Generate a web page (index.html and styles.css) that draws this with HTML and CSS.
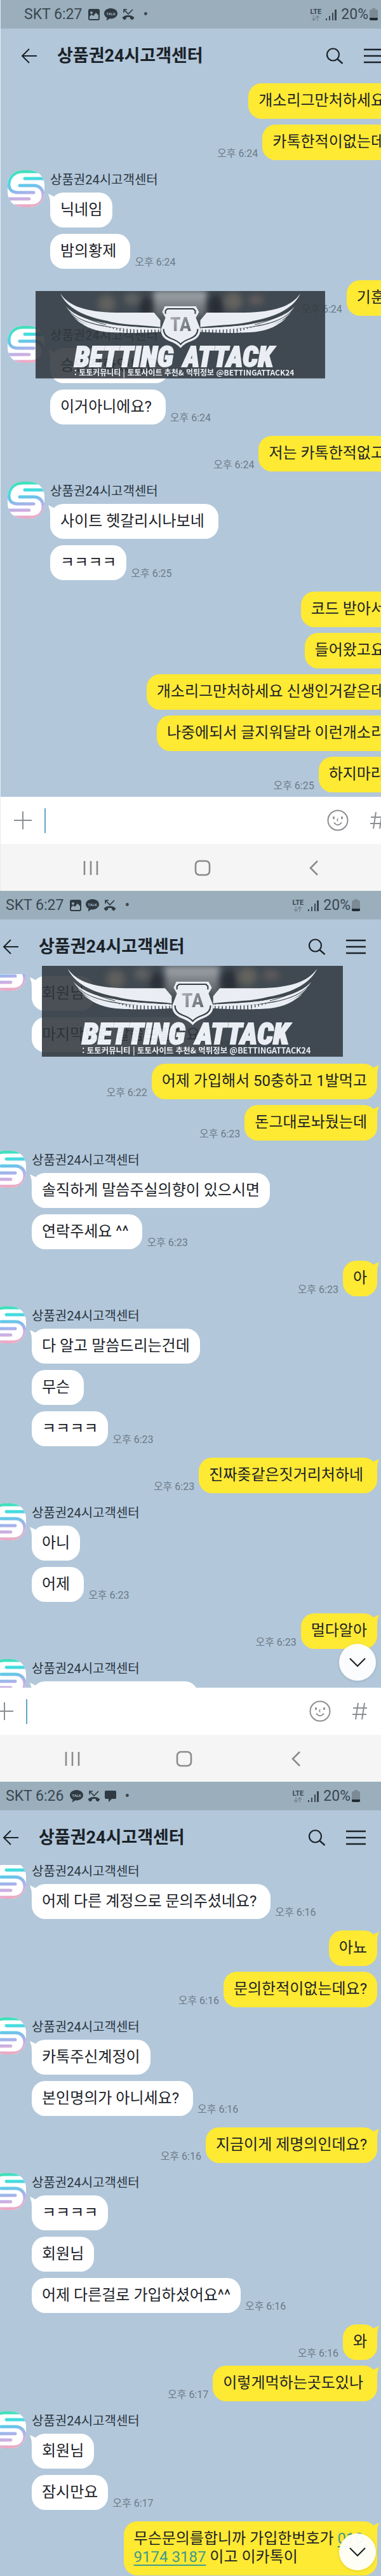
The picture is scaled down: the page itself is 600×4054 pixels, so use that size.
FILE: index.html
```
<!DOCTYPE html>
<html lang="ko">
<head>
  <meta charset="UTF-8">
  <meta name="viewport" content="width=device-width, initial-scale=1.0">
  <title>상품권24시고객센터</title>
  <link rel="stylesheet" href="styles.css">
</head>
<body>

<!-- icons -->
<svg class="defs" aria-hidden="true">
  <defs>
    <linearGradient id="rainbow" gradientUnits="userSpaceOnUse" x1="24" y1="0" x2="32" y2="58">
      <stop offset="0" stop-color="#43dfb4"/>
      <stop offset="0.22" stop-color="#3fe0dc"/>
      <stop offset="0.44" stop-color="#6cc3ea"/>
      <stop offset="0.62" stop-color="#a9b2ea"/>
      <stop offset="0.8" stop-color="#d3aee0"/>
      <stop offset="1" stop-color="#f2a9bd"/>
    </linearGradient>
    <clipPath id="round"><rect width="58" height="58" rx="23"/></clipPath>
    <linearGradient id="sky" x1="0" y1="0" x2="0" y2="1">
      <stop offset="0" stop-color="#a9adb0"/>
      <stop offset="0.6" stop-color="#8b8f92" stop-opacity="0.5"/>
      <stop offset="1" stop-color="#34393f" stop-opacity="0"/>
    </linearGradient>
    <linearGradient id="steel" x1="0" y1="0" x2="1" y2="1">
      <stop offset="0" stop-color="#b9bcbf"/>
      <stop offset="1" stop-color="#55595d"/>
    </linearGradient>
    <filter id="soft" x="-30%" y="-30%" width="160%" height="160%"><feGaussianBlur stdDeviation="5"/></filter>
  </defs>

  <symbol id="avatar" viewBox="0 0 58 58">
    <g clip-path="url(#round)">
      <rect width="58" height="58" fill="#fff"/>
      <g fill="none" stroke="url(#rainbow)" stroke-width="5" stroke-linecap="round">
        <path d="M54 2H24C10 2 2 11 2 22C2 31 8 35 16 35H41"/>
        <path d="M27 13L58 13.1"/>
        <path d="M19 24H41C50 24 56 30 56 39C56 49 49 56 38 56H6"/>
        <path d="M0 45L34 45.1"/>
      </g>
    </g>
  </symbol>
  <symbol id="i-image" viewBox="0 0 18 18">
    <path fill="#2f3a42" fill-rule="evenodd" d="M3 0H15Q18 0 18 3V15Q18 18 15 18H3Q0 18 0 15V3Q0 0 3 0ZM2 12V15Q2 16 3 16H15Q16 16 16 15V10L12 6L8 11L5 9ZM5 4A2 2 0 1 0 5 8A2 2 0 1 0 5 4Z"/>
  </symbol>
  <symbol id="i-talk" viewBox="0 0 21 20">
    <path fill="#2f3a42" d="M10.500 0C4.700 0 0 3.600 0 8.200C0 11 1.800 13.400 4.500 14.900L3.700 19.500L8.600 16.300C9.200 16.400 9.900 16.400 10.500 16.400C16.300 16.400 21 12.800 21 8.200C21 3.600 16.300 0 10.500 0Z"/>
    <text x="10.500" y="10.800" text-anchor="middle" font-size="6" font-weight="700" fill="#9aaebc">TALK</text>
  </symbol>
  <symbol id="i-missed" viewBox="0 0 20 18">
    <path fill="none" stroke="#2f3a42" stroke-width="1.600" d="M3 6V1H8M3 1L10 8L17 1"/>
    <path fill="#2f3a42" d="M10 10C5.500 10 2.500 11.500 0.500 13.800L3.500 17.500L7 15.500V13.200Q10 12.300 13 13.200V15.500L16.500 17.500L19.500 13.800C17.500 11.500 14.500 10 10 10Z"/>
  </symbol>
  <symbol id="i-sms" viewBox="0 0 18 18">
    <path fill="#2f3a42" d="M2 0H16Q18 0 18 2V11Q18 13 16 13H11L6 18V13H2Q0 13 0 11V2Q0 0 2 0Z"/>
  </symbol>
  <symbol id="i-updown" viewBox="0 0 14 9">
    <path fill="none" stroke="#74858f" stroke-width="1.300" d="M4 0V7M1 5L4 8L7 5M10 9V1M7 4L10 1L13 4"/>
  </symbol>
  <symbol id="i-signal" viewBox="0 0 17 18">
    <path fill="#3a4750" d="M0 15H2V18H0ZM5 11H7V18H5ZM10 6H12V18H10ZM14 1H17V18H14Z"/>
  </symbol>
  <symbol id="i-battery" viewBox="0 0 13 19">
    <path fill="#7b8a94" d="M4 0H9V2H11Q13 2 13 4V15H0V4Q0 2 2 2H4Z"/>
    <path fill="#1f2a32" d="M0 15H13V17Q13 19 11 19H2Q0 19 0 17Z"/>
  </symbol>
  <symbol id="i-back" viewBox="0 0 25 24">
    <path fill="none" stroke="#1b2228" stroke-width="2" d="M13 1L2 12L13 23M2 12H25"/>
  </symbol>
  <symbol id="i-search" viewBox="0 0 28 26">
    <circle cx="11.500" cy="11" r="9.500" fill="none" stroke="#1b2228" stroke-width="2.200"/>
    <path stroke="#1b2228" stroke-width="2.400" d="M18 17.500L26.500 25"/>
  </symbol>
  <symbol id="i-menu" viewBox="0 0 31 24">
    <path stroke="#1b2228" stroke-width="2.400" d="M0 2H31M0 12H31M0 22H31"/>
  </symbol>
  <symbol id="i-plus" viewBox="0 0 28 28">
    <path stroke="#8b8e92" stroke-width="2" d="M14 0V28M0 14H28"/>
  </symbol>
  <symbol id="i-smile" viewBox="0 0 34 34">
    <g fill="none" stroke="#8b8e92" stroke-width="2">
      <circle cx="17" cy="17" r="15.500"/>
      <path d="M11 20.500Q17 28 23 20.500"/>
      <path stroke-width="1.500" d="M17.500 14Q14.500 16.500 17.500 18.500"/>
      <path stroke-width="2.600" d="M10.500 11V15M23.500 11V15"/>
    </g>
  </symbol>
  <symbol id="i-hash" viewBox="0 0 23 28">
    <path stroke="#8b8e92" stroke-width="2" d="M9 1L5 27M19 1L15 27M1 9H23M0 19H22"/>
  </symbol>
  <symbol id="i-recent" viewBox="0 0 24 24">
    <path stroke="#8a8a8a" stroke-width="2.600" d="M2 1V23M12 1V23M22 1V23"/>
  </symbol>
  <symbol id="i-home" viewBox="0 0 26 26">
    <rect x="2" y="2" width="22" height="22" rx="6" fill="none" stroke="#8a8a8a" stroke-width="2.600"/>
  </symbol>
  <symbol id="i-prev" viewBox="0 0 14 24">
    <path fill="none" stroke="#8a8a8a" stroke-width="2.600" d="M13 1L2 12L13 23"/>
  </symbol>
  <symbol id="i-down" viewBox="0 0 26 16">
    <path fill="none" stroke="#1b2228" stroke-width="2.200" d="M1 2L13 14L25 2"/>
  </symbol>

  <symbol id="wing" viewBox="0 0 160 66">
    <g fill="#edf1f6">
      <path d="M0 0C14 20 40 29 88 30L148 30L158 42V53C128 49 98 50 74 43C36 36 10 22 0 0Z"/>
      <path d="M9 20C20 33 42 42 70 46C92 52 120 52 158 55L158 57C122 57 96 56 72 51C40 46 18 36 9 20Z"/>
      <path d="M15 29C27 41 46 48 74 53L90 58C58 56 28 47 15 29Z"/>
      <path d="M22 38C36 48 54 53 84 56L96 60C64 60 37 54 22 38Z"/>
      <path d="M32 46C46 54 64 57 94 59L102 61C74 63 48 59 32 46Z"/>
    </g>
    <path fill="none" stroke="#edf1f6" stroke-width="7" stroke-dasharray="4 1.500" d="M68 55C92 60 120 59 158 57"/>
    <path fill="none" stroke="#34393f" stroke-width="1" d="M60 43C84 51 118 51 158 54M30 33C44 41 56 45 72 49"/>
  </symbol>

  <symbol id="banner" viewBox="0 0 457 138">
    <rect width="457" height="138" fill="#30363d" fill-opacity="0.92"/>
    <rect x="186" width="84" height="58" fill="url(#sky)" filter="url(#soft)"/>
    <g filter="url(#soft)">
      <ellipse cx="112" cy="20" rx="14" ry="14" fill="#6f6a60" opacity="0.6"/>
      <ellipse cx="152" cy="12" rx="12" ry="10" fill="#77746d" opacity="0.5"/>
      <ellipse cx="174" cy="26" rx="10" ry="16" fill="#23282d"/>
      <ellipse cx="284" cy="26" rx="12" ry="20" fill="#23282d"/>
      <ellipse cx="312" cy="16" rx="14" ry="14" fill="#77705f" opacity="0.6"/>
      <ellipse cx="348" cy="14" rx="12" ry="8" fill="#7d6a61" opacity="0.5"/>
    </g>
    <use href="#wing" x="39" y="4" width="160" height="66"/>
    <use href="#wing" x="39" y="4" width="160" height="66" transform="translate(457 0) scale(-1 1)"/>
    <path fill="#edf1f6" d="M204 24H253L258 33L253 42L260 60Q261 73 246 79Q234 83 229 90Q223 83 211 79Q197 73 198 60L205 42L200 33Z"/>
    <path fill="none" stroke="#30363d" stroke-width="2" d="M205 36V31L208 28H249L252 31V36M202 60Q202 71 214 75Q225 79 229 84Q233 79 244 75Q256 71 256 60"/>
    <text class="banner-ta" x="229" y="63" text-anchor="middle" fill="url(#steel)">TA</text>
    <text class="banner-name" x="61" y="119">BETTING</text>
    <text class="banner-name" x="233" y="119">ATTACK</text>
    <text class="banner-sub" x="61" y="133">: 토토커뮤니티 | 토토사이트 추천&amp; 먹튀정보 @BETTINGATTACK24</text>
  </symbol>
</svg>

<!-- 6:27 (1) -->
<section class="screen cut-right">
  <div class="phone">
    <div class="status">
      <span>SKT 6:27</span>
      <svg width="18" height="18"><use href="#i-image"/></svg>
      <svg width="21" height="20"><use href="#i-talk"/></svg>
      <svg width="20" height="18"><use href="#i-missed"/></svg>
      <span class="dot">•</span>
      <span class="lte">LTE<svg width="14" height="9"><use href="#i-updown"/></svg></span>
      <svg width="17" height="18"><use href="#i-signal"/></svg>
      <span class="battery">20%<svg width="13" height="19"><use href="#i-battery"/></svg></span>
    </div>
    <header class="header">
      <button type="button" aria-label="뒤로"><svg width="25" height="24"><use href="#i-back"/></svg></button>
      <h1>상품권24시고객센터</h1>
      <button type="button" aria-label="검색"><svg width="28" height="26"><use href="#i-search"/></svg></button>
      <button type="button" aria-label="메뉴"><svg width="31" height="24"><use href="#i-menu"/></svg></button>
    </header>
    <main class="chat">
      <div class="mine">
        <div class="row"><p class="bubble">개소리그만처하세요</p></div>
        <div class="row"><p class="bubble">카톡한적이없는데</p><time>오후 6:24</time></div>
      </div>
      <div class="theirs">
        <svg class="avatar"><use href="#avatar"/></svg>
        <div class="msgs">
          <h2>상품권24시고객센터</h2>
          <div class="row"><p class="bubble tail">닉네임</p></div>
          <div class="row"><p class="bubble">밤의황제&nbsp;</p><time>오후 6:24</time></div>
        </div>
      </div>
      <div class="mine">
        <div class="row"><p class="bubble tail">기훈</p><time>오후 6:24</time></div>
      </div>
      <div class="theirs">
        <svg class="avatar"><use href="#avatar"/></svg>
        <div class="msgs">
          <h2>상품권24시고객센터</h2>
          <div class="row"><p class="bubble tail">승인전화있나요</p></div>
          <div class="row"><p class="bubble">이거아니에요?&nbsp;</p><time>오후 6:24</time></div>
        </div>
      </div>
      <div class="mine">
        <div class="row"><p class="bubble tail">저는 카톡한적없고</p><time>오후 6:24</time></div>
      </div>
      <div class="theirs">
        <svg class="avatar"><use href="#avatar"/></svg>
        <div class="msgs">
          <h2>상품권24시고객센터</h2>
          <div class="row"><p class="bubble tail">사이트 헷갈리시나보네&nbsp;</p></div>
          <div class="row"><p class="bubble">ㅋㅋㅋㅋ</p><time>오후 6:25</time></div>
        </div>
      </div>
      <div class="mine">
        <div class="row"><p class="bubble tail">코드 받아서</p></div>
        <div class="row"><p class="bubble">들어왔고요</p></div>
        <div class="row"><p class="bubble">개소리그만처하세요 신생인거같은데</p></div>
        <div class="row"><p class="bubble">나중에되서 글지워달라 이런개소리</p></div>
        <div class="row"><p class="bubble">하지마라</p><time>오후 6:25</time></div>
      </div>
    </main>
    <form class="compose">
      <button type="button" aria-label="추가"><svg width="28" height="28"><use href="#i-plus"/></svg></button>
      <input type="text" aria-label="메시지 입력">
      <button type="button" aria-label="이모티콘"><svg width="34" height="34"><use href="#i-smile"/></svg></button>
      <button type="button" aria-label="샵검색"><svg width="23" height="28"><use href="#i-hash"/></svg></button>
    </form>
    <nav class="nav">
      <button type="button" aria-label="최근 앱"><svg width="24" height="24"><use href="#i-recent"/></svg></button>
      <button type="button" aria-label="홈"><svg width="26" height="26"><use href="#i-home"/></svg></button>
      <button type="button" aria-label="이전"><svg width="14" height="24"><use href="#i-prev"/></svg></button>
    </nav>
  </div>
  <svg class="banner banner-a" viewBox="0 0 457 138" role="img" aria-label="BETTING ATTACK"><use href="#banner"/></svg>
</section>

<!-- 6:27 (2) -->
<section class="screen cut-left">
  <div class="phone">
    <div class="status">
      <span>SKT 6:27</span>
      <svg width="18" height="18"><use href="#i-image"/></svg>
      <svg width="21" height="20"><use href="#i-talk"/></svg>
      <svg width="20" height="18"><use href="#i-missed"/></svg>
      <span class="dot">•</span>
      <span class="lte">LTE<svg width="14" height="9"><use href="#i-updown"/></svg></span>
      <svg width="17" height="18"><use href="#i-signal"/></svg>
      <span class="battery">20%<svg width="13" height="19"><use href="#i-battery"/></svg></span>
    </div>
    <header class="header">
      <button type="button" aria-label="뒤로"><svg width="25" height="24"><use href="#i-back"/></svg></button>
      <h1>상품권24시고객센터</h1>
      <button type="button" aria-label="검색"><svg width="28" height="26"><use href="#i-search"/></svg></button>
      <button type="button" aria-label="메뉴"><svg width="31" height="24"><use href="#i-menu"/></svg></button>
    </header>
    <main class="chat">
      <div class="theirs scrolled-far">
        <svg class="avatar"><use href="#avatar"/></svg>
        <div class="msgs">
          <h2>상품권24시고객센터</h2>
          <div class="row"><p class="bubble tail">회원님</p></div>
          <div class="row"><p class="bubble">마지막으로 말씀드릴게요</p><time>오후 6:22</time></div>
        </div>
      </div>
      <div class="mine">
        <div class="row"><p class="bubble tail">어제 가입해서 50충하고 1발먹고</p><time>오후 6:22</time></div>
        <div class="row"><p class="bubble tail">돈그대로놔뒀는데</p><time>오후 6:23</time></div>
      </div>
      <div class="theirs">
        <svg class="avatar"><use href="#avatar"/></svg>
        <div class="msgs">
          <h2>상품권24시고객센터</h2>
          <div class="row"><p class="bubble tail">솔직하게 말씀주실의향이 있으시면</p></div>
          <div class="row"><p class="bubble">연락주세요 ^^&nbsp;</p><time>오후 6:23</time></div>
        </div>
      </div>
      <div class="mine">
        <div class="row"><p class="bubble tail">아</p><time>오후 6:23</time></div>
      </div>
      <div class="theirs">
        <svg class="avatar"><use href="#avatar"/></svg>
        <div class="msgs">
          <h2>상품권24시고객센터</h2>
          <div class="row"><p class="bubble tail">다 알고 말씀드리는건데</p></div>
          <div class="row"><p class="bubble">무슨&nbsp;</p></div>
          <div class="row"><p class="bubble">ㅋㅋㅋㅋ</p><time>오후 6:23</time></div>
        </div>
      </div>
      <div class="mine">
        <div class="row"><p class="bubble tail">진짜좆같은짓거리처하네&nbsp;</p><time>오후 6:23</time></div>
      </div>
      <div class="theirs">
        <svg class="avatar"><use href="#avatar"/></svg>
        <div class="msgs">
          <h2>상품권24시고객센터</h2>
          <div class="row"><p class="bubble tail">아니</p></div>
          <div class="row"><p class="bubble">어제&nbsp;</p><time>오후 6:23</time></div>
        </div>
      </div>
      <div class="mine">
        <div class="row"><p class="bubble tail">멀다알아</p><time>오후 6:23</time></div>
      </div>
      <div class="theirs under-input">
        <svg class="avatar"><use href="#avatar"/></svg>
        <div class="msgs">
          <h2>상품권24시고객센터</h2>
          <div class="row"><p class="bubble tail wide"></p></div>
        </div>
      </div>
      <button type="button" class="to-bottom" aria-label="맨 아래로"><svg width="26" height="16"><use href="#i-down"/></svg></button>
    </main>
    <form class="compose">
      <button type="button" aria-label="추가"><svg width="28" height="28"><use href="#i-plus"/></svg></button>
      <input type="text" aria-label="메시지 입력">
      <button type="button" aria-label="이모티콘"><svg width="34" height="34"><use href="#i-smile"/></svg></button>
      <button type="button" aria-label="샵검색"><svg width="23" height="28"><use href="#i-hash"/></svg></button>
    </form>
    <nav class="nav">
      <button type="button" aria-label="최근 앱"><svg width="24" height="24"><use href="#i-recent"/></svg></button>
      <button type="button" aria-label="홈"><svg width="26" height="26"><use href="#i-home"/></svg></button>
      <button type="button" aria-label="이전"><svg width="14" height="24"><use href="#i-prev"/></svg></button>
    </nav>
  </div>
  <svg class="banner banner-b" viewBox="0 0 457 138" role="img" aria-label="BETTING ATTACK"><use href="#banner"/></svg>
</section>

<!-- 6:26 -->
<section class="screen cut-left">
  <div class="phone">
    <div class="status">
      <span>SKT 6:26</span>
      <svg width="21" height="20"><use href="#i-talk"/></svg>
      <svg width="20" height="18"><use href="#i-missed"/></svg>
      <svg width="18" height="18"><use href="#i-sms"/></svg>
      <span class="dot">•</span>
      <span class="lte">LTE<svg width="14" height="9"><use href="#i-updown"/></svg></span>
      <svg width="17" height="18"><use href="#i-signal"/></svg>
      <span class="battery">20%<svg width="13" height="19"><use href="#i-battery"/></svg></span>
    </div>
    <header class="header">
      <button type="button" aria-label="뒤로"><svg width="25" height="24"><use href="#i-back"/></svg></button>
      <h1>상품권24시고객센터</h1>
      <button type="button" aria-label="검색"><svg width="28" height="26"><use href="#i-search"/></svg></button>
      <button type="button" aria-label="메뉴"><svg width="31" height="24"><use href="#i-menu"/></svg></button>
    </header>
    <main class="chat last">
      <div class="theirs scrolled">
        <svg class="avatar"><use href="#avatar"/></svg>
        <div class="msgs">
          <h2>상품권24시고객센터</h2>
          <div class="row"><p class="bubble tail">어제 다른 계정으로 문의주셨네요?&nbsp;</p><time>오후 6:16</time></div>
        </div>
      </div>
      <div class="mine">
        <div class="row"><p class="bubble tail">아뇨</p></div>
        <div class="row"><p class="bubble">문의한적이없는데요?</p><time>오후 6:16</time></div>
      </div>
      <div class="theirs">
        <svg class="avatar"><use href="#avatar"/></svg>
        <div class="msgs">
          <h2>상품권24시고객센터</h2>
          <div class="row"><p class="bubble tail">카톡주신계정이</p></div>
          <div class="row"><p class="bubble">본인명의가 아니세요?&nbsp;</p><time>오후 6:16</time></div>
        </div>
      </div>
      <div class="mine">
        <div class="row"><p class="bubble tail">지금이게 제명의인데요?</p><time>오후 6:16</time></div>
      </div>
      <div class="theirs">
        <svg class="avatar"><use href="#avatar"/></svg>
        <div class="msgs">
          <h2>상품권24시고객센터</h2>
          <div class="row"><p class="bubble tail">ㅋㅋㅋㅋ</p></div>
          <div class="row"><p class="bubble">회원님</p></div>
          <div class="row"><p class="bubble">어제 다른걸로 가입하셨어요^^</p><time>오후 6:16</time></div>
        </div>
      </div>
      <div class="mine">
        <div class="row"><p class="bubble tail">와</p><time>오후 6:16</time></div>
        <div class="row"><p class="bubble tail">이렇게먹하는곳도있나&nbsp;</p><time>오후 6:17</time></div>
      </div>
      <div class="theirs">
        <svg class="avatar"><use href="#avatar"/></svg>
        <div class="msgs">
          <h2>상품권24시고객센터</h2>
          <div class="row"><p class="bubble tail">회원님</p></div>
          <div class="row"><p class="bubble">잠시만요</p><time>오후 6:17</time></div>
        </div>
      </div>
      <div class="mine">
        <div class="row"><p class="bubble tail">무슨문의를합니까 가입한번호가 <a href="tel:01091743187">010&nbsp;<br>9174 3187</a> 이고 이카톡이</p></div>
      </div>
      <button type="button" class="to-bottom" aria-label="맨 아래로"><svg width="26" height="16"><use href="#i-down"/></svg></button>
    </main>
  </div>
</section>

</body>
</html>
```

FILE: styles.css
```
* {
  box-sizing: border-box;
}
body {
  margin: 0;
  font-family: Roboto, "Noto Sans CJK KR", sans-serif;
  background-color: #b2c7da;
  color: #1b2228;
}
h1, h2, p {
  margin: 0;
}
button {
  padding: 0;
  border: none;
  background: none;
  cursor: pointer;
}
svg {
  display: block;
  flex: none;
}
.defs {
  position: absolute;
  width: 0;
  height: 0;
}

/* each screen is a bit wider than the page and gets cut on one side */
.screen {
  position: relative;
  overflow: hidden;
}
.cut-right .phone {
  margin-right: -28px;
  border-left: 1px solid #e4ebf1;
}
.cut-left .phone {
  margin-left: -28px;
}

.status {
  display: flex;
  align-items: center;
  gap: 7px;
  height: 45px;
  padding: 0 33px 0 37px;
  background-color: #9aaebc;
  color: #3a4750;
  font-size: 23px;
}
.status span:first-child {
  margin-right: 3px;
}
.dot {
  padding-left: 6px;
}
.lte {
  display: flex;
  flex-direction: column;
  align-items: center;
  margin-left: auto;
  font-size: 11px;
  line-height: 11px;
  font-weight: bold;
}
.battery {
  display: flex;
  align-items: center;
  gap: 2px;
}

.header {
  display: flex;
  align-items: center;
  height: 86px;
  padding: 0 24px 0 32px;
  gap: 32px;
}
.header h1 {
  flex: 1;
  font-size: 27px;
  line-height: 40px;
  font-weight: bold;
}

.chat {
  position: relative;
  overflow: hidden;
  padding: 0 6px 7px 11px;
}
.chat.last {
  padding-bottom: 3px;
}
.mine, .msgs {
  display: flex;
  flex-direction: column;
}
.mine {
  gap: 9px;
}
.theirs {
  display: flex;
  gap: 9px;
}
.mine + .theirs {
  margin-top: 16px;
}
.theirs + .mine {
  margin-top: 18px;
}
.msgs {
  gap: 10px;
}
.msgs h2 {
  margin-bottom: -5px;
  font-size: 20px;
  line-height: 30px;
  font-weight: normal;
  color: #2b3640;
}
.avatar {
  width: 58px;
  height: 58px;
}
.row {
  display: flex;
  align-items: flex-end;
  gap: 7px;
}
.mine .row {
  flex-direction: row-reverse;
}
.bubble {
  position: relative;
  padding: 13px 16px;
  border-radius: 21px;
  background-color: #fff;
  font-size: 24px;
  line-height: 29px;
  white-space: nowrap;
}
.mine .bubble {
  padding-bottom: 14px;
  background-color: #fee933;
}
.bubble a {
  color: #3f9a8c;
  text-decoration: underline;
  text-underline-offset: 4px;
}
.bubble.wide {
  width: 262px;
  height: 55px;
}
.tail::before {
  content: "";
  position: absolute;
  top: 2px;
  left: -3px;
  width: 14px;
  height: 18px;
  background-color: #fff;
  clip-path: polygon(0 0, 60% 22%, 100% 60%, 22% 100%, 18% 45%);
}
.mine .tail::before {
  left: auto;
  right: -3px;
  background-color: #fee933;
  clip-path: polygon(100% 0, 40% 22%, 0 60%, 78% 100%, 82% 45%);
}
time {
  font-size: 16px;
  line-height: 20px;
  color: #6c7a87;
  white-space: nowrap;
}

/* groups partly hidden by the header or the input bar */
.scrolled {
  margin-top: -5px;
}
.scrolled-far {
  margin-top: -32px;
}
.under-input {
  margin-bottom: -52px;
}

.to-bottom {
  position: absolute;
  right: 8px;
  bottom: 11px;
  display: flex;
  align-items: center;
  justify-content: center;
  width: 58px;
  height: 58px;
  border-radius: 50%;
  background-color: rgba(255, 255, 255, 0.95);
  box-shadow: 0 1px 4px rgba(0, 0, 0, 0.12);
}

.compose {
  display: flex;
  align-items: center;
  gap: 20px;
  height: 74px;
  padding: 0 22px 0 21px;
  background-color: #fff;
}
.compose input {
  flex: 1;
  min-width: 0;
  height: 39px;
  padding: 0 8px;
  border: none;
  border-left: 2px solid #66a5c6;
  outline: none;
  font-size: 24px;
}
.compose button:last-child {
  margin-left: 14px;
}
.nav {
  display: flex;
  align-items: center;
  height: 74px;
  padding: 2px 46px 0 54px;
  background-color: #f5f5f5;
}
.nav button {
  flex: 1;
  display: flex;
  justify-content: center;
}

/* watermark over the chat */
.banner {
  position: absolute;
  opacity: 0.95;
}
.banner-a {
  top: 458px;
  left: 56px;
  width: 76%;
}
.banner-b {
  top: 118px;
  left: 66px;
  width: 79%;
}
.banner-ta {
  font-family: "Liberation Sans Narrow", "Roboto Condensed", Roboto, sans-serif;
  font-size: 31px;
  font-weight: bold;
}
.banner-name {
  font-family: "Liberation Sans Narrow", "Roboto Condensed", Roboto, sans-serif;
  font-size: 44px;
  font-style: italic;
  font-weight: 900;
  fill: #edf1f6;
  stroke: #edf1f6;
  stroke-width: 2px;
}
.banner-sub {
  font-family: "Noto Sans CJK KR", sans-serif;
  font-size: 12px;
  font-weight: bold;
  fill: #edf1f6;
}
```
